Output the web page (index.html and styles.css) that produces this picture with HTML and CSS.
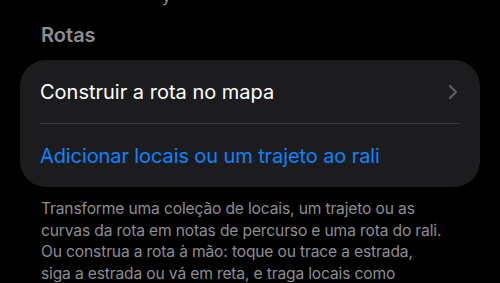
FILE: index.html
```html
<!doctype html>
<html>
  <head>
    <meta charset="utf-8" />
    <title>Rotas</title>
    <link rel="stylesheet" href="styles.css">
  </head>
  <body>
    <div class="screen">
      <p class="prev-footer">y</p>
      <h2 class="section-title">Rotas</h2>
      <div class="group">
        <div class="row">
          <span class="row-label">Construir a rota no mapa</span>
          <svg class="chevron" width="10" height="16" viewBox="0 0 10 16"><path d="M2 2 L8 8 L2 14" fill="none" stroke="#5a5a5f" stroke-width="2.4" stroke-linecap="round" stroke-linejoin="round"/></svg>
        </div>
        <div class="sep"></div>
        <div class="row">
          <span class="row-label link">Adicionar locais ou um trajeto ao rali</span>
        </div>
      </div>
      <p class="footer">Transforme uma coleção de locais, um trajeto ou as<br>curvas da rota em notas de percurso e uma rota do rali.<br>Ou construa a rota à mão: toque ou trace a estrada,<br>siga a estrada ou vá em reta, e traga locais como<br>pontos.</p>
    </div>
  </body>
</html>
```

FILE: styles.css
```css
* { margin: 0; padding: 0; box-sizing: border-box; }
body { background: #000; color: #fff; font-family: Inter, "Noto Sans", sans-serif; overflow: hidden; }
.screen { width: 500px; height: 283px; padding: 0 20px; position: relative; overflow: hidden; }
.prev-footer { position: absolute; top: -14px; left: 162px; color: #8d8d93; font-size: 16px; }
.section-title { color: #8d8d93; font-size: 20px; font-weight: 600; padding: 23px 21px 0; height: 60px; }
.group { background: #1c1c1e; border-radius: 26px; }
.row { display: flex; align-items: center; justify-content: space-between; height: 63px; padding: 0 22px 0 20px; }
.row-label { font-size: 20px; }
.link { color: #0a84ff; letter-spacing: -0.1px; }
.sep { height: 1px; background: #38383a; margin: 0 20px; }
.footer { color: #8d8d93; font-size: 15.6px; letter-spacing: -0.15px; line-height: 21.6px; white-space: nowrap; padding: 11px 0 0 21px; }
```
